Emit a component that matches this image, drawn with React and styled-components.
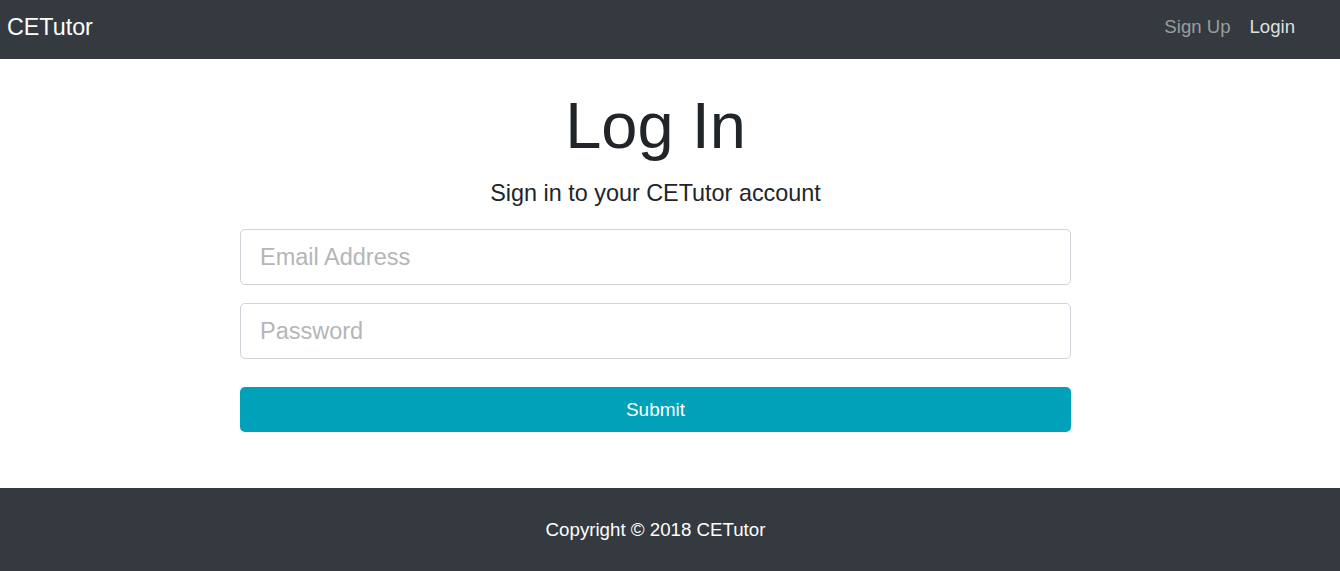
import React from 'react';
import styled, {createGlobalStyle} from 'styled-components';

const GlobalStyle = createGlobalStyle`
	html, body {
		margin: 0;
		padding: 0;
		background: #fff;
		font-family: "Liberation Sans", Arial, sans-serif;
		color: #212529;
	}
	* {
		box-sizing: border-box;
	}
`;

const Page = styled.div`
	display: flex;
	flex-direction: column;
	min-height: 571px;
`;

const NavBar = styled.nav`
	height: 59px;
	background: #343a40;
	display: flex;
	align-items: center;
	justify-content: space-between;
	padding: 0 45px 0 7px;
`;

const Brand = styled.a`
	font-size: 23.3px;
	color: #fff;
	text-decoration: none;
	margin-top: -5px;
`;

const NavLinks = styled.div`
	display: flex;
	gap: 19px;
	margin-top: -5px;
`;

const NavLink = styled.a`
	font-size: 18.6px;
	text-decoration: none;
	color: ${props => props.active ? 'rgba(255,255,255,0.85)' : 'rgba(255,255,255,0.5)'};
`;

const Main = styled.main`
	flex: 1;
	display: flex;
	flex-direction: column;
	align-items: center;
	padding: 28px 29px 56px 0;
`;

const Title = styled.h1`
	margin: 0;
	font-size: 65px;
	font-weight: 400;
	line-height: 1.2;
`;

const Subtitle = styled.p`
	margin: 13px 0 21px;
	font-size: 23.4px;
	line-height: 1.3;
`;

const Form = styled.form`
	width: 831px;
	display: flex;
	flex-direction: column;
	gap: 18px;
`;

const Input = styled.input`
	height: 56px;
	width: 100%;
	padding: 0 19px;
	font-family: "Liberation Sans", Arial, sans-serif;
	font-size: 23.5px;
	color: #495057;
	border: 1px solid #ced4da;
	border-radius: 5px;
	outline: none;
	&::placeholder {
		color: #b4b6b8;
	}
`;

const SubmitBtn = styled.button`
	margin-top: 10px;
	height: 45px;
	width: 100%;
	border: none;
	border-radius: 5px;
	background: #00a1b9;
	color: #fff;
	font-family: "Liberation Sans", Arial, sans-serif;
	font-size: 19px;
	cursor: pointer;
`;

const Footer = styled.footer`
	height: 83px;
	background: #343a40;
	color: #fff;
	display: flex;
	align-items: center;
	justify-content: center;
	padding: 1px 29px 0 0;
	font-size: 18.7px;
`;

export default function App() {
	return (
		<Page>
			<GlobalStyle/>
			<NavBar>
				<Brand href="#">CETutor</Brand>
				<NavLinks>
					<NavLink href="#">Sign Up</NavLink>
					<NavLink href="#" active>Login</NavLink>
				</NavLinks>
			</NavBar>
			<Main>
				<Title>Log In</Title>
				<Subtitle>Sign in to your CETutor account</Subtitle>
				<Form onSubmit={e => e.preventDefault()}>
					<Input type="email" placeholder="Email Address"/>
					<Input type="password" placeholder="Password"/>
					<SubmitBtn type="submit">Submit</SubmitBtn>
				</Form>
			</Main>
			<Footer>Copyright © 2018 CETutor</Footer>
		</Page>
	);
}
